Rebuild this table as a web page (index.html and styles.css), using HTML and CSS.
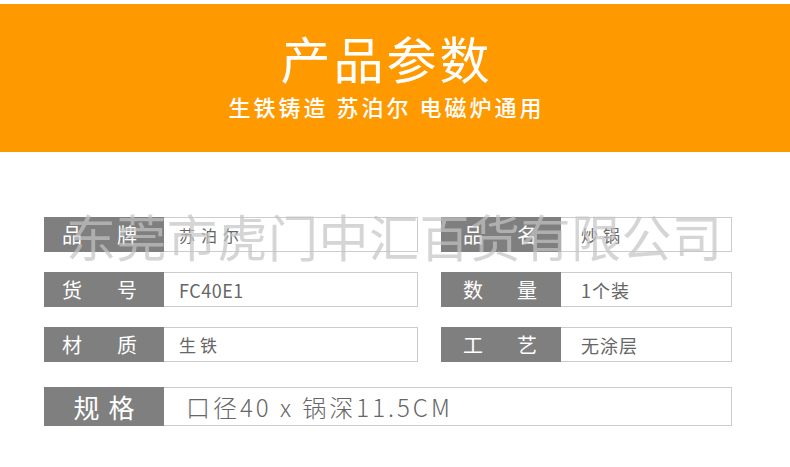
FILE: index.html
```html
<!DOCTYPE html>
<html lang="zh-CN">
<head>
<meta charset="utf-8">
<title>产品参数</title>
<link rel="stylesheet" href="styles.css">
</head>
<body>
<header class="banner">
  <h1 class="title">产品参数</h1>
  <p class="subtitle">生铁铸造 苏泊尔 电磁炉通用</p>
</header>
<section class="params">
  <div class="grid">
    <div class="field">
      <div class="label label-left"><span>品</span><span>牌</span></div>
      <div class="value value-left sp6">苏泊尔</div>
    </div>
    <div class="field">
      <div class="label label-right"><span>品</span><span>名</span></div>
      <div class="value value-right sp5">炒锅</div>
    </div>
    <div class="field">
      <div class="label label-left"><span>货</span><span>号</span></div>
      <div class="value value-left">FC40E1</div>
    </div>
    <div class="field">
      <div class="label label-right"><span>数</span><span>量</span></div>
      <div class="value value-right">1个装</div>
    </div>
    <div class="field">
      <div class="label label-left"><span>材</span><span>质</span></div>
      <div class="value value-left sp4">生铁</div>
    </div>
    <div class="field">
      <div class="label label-right"><span>工</span><span>艺</span></div>
      <div class="value value-right">无涂层</div>
    </div>
    <div class="field field-wide">
      <div class="label label-spec">规格</div>
      <div class="value value-spec">口径40 x 锅深11.5CM</div>
    </div>
  </div>
  <div class="watermark">东莞市虎门中汇百货有限公司</div>
</section>
</body>
</html>
```
FILE: styles.css
```css
* { box-sizing: border-box; }

html, body {
  margin: 0;
  padding: 0;
  background: #ffffff;
  font-family: "Noto Sans CJK SC", "Noto Sans", sans-serif;
}

.banner {
  margin-top: 4px;
  height: 148px;
  background: #ff9900;
  color: #ffffff;
  padding: 23px 17px 0 0;
  text-align: center;
}

.title {
  margin: 0;
  font-size: 50px;
  line-height: 60px;
  font-weight: 400;
  letter-spacing: 3px;
}

.subtitle {
  margin: 4px 0 0 0;
  font-size: 22px;
  line-height: 30px;
  font-weight: 500;
  letter-spacing: 3px;
}

.params {
  position: relative;
  padding: 65px 0 0 44px;
  height: 315px;
}

.grid {
  display: grid;
  grid-template-columns: 374px 291px;
  column-gap: 23px;
  row-gap: 20px;
}

.field {
  display: flex;
  height: 35px;
}

.field-wide {
  grid-column: 1 / 3;
  height: 39px;
  margin-top: 5px;
}

.label {
  width: 120px;
  flex: none;
  background: #7f7f7f;
  color: #ffffff;
  font-size: 20px;
  display: flex;
  align-items: center;
  justify-content: space-between;
}

.label-left { padding: 0 27px 0 18px; }
.label-right { padding: 0 24px 0 22px; }

.label-spec {
  justify-content: center;
  font-size: 26px;
  letter-spacing: 9px;
  padding-left: 9px;
}

.value {
  flex: 1;
  border: 1px solid #cccccc;
  border-left: none;
  color: #666666;
  font-size: 18px;
  display: flex;
  align-items: center;
  white-space: nowrap;
}

.value-left { padding-left: 15px; letter-spacing: 0.5px; }
.value-right { padding-left: 20px; letter-spacing: 1px; }
.sp6 { font-size: 16px; letter-spacing: 6px; }
.sp5 { font-size: 17px; letter-spacing: 5px; }
.sp4 { font-size: 17px; letter-spacing: 4px; }

.value-spec {
  padding-left: 22px;
  font-size: 24px;
  letter-spacing: 3px;
  font-weight: 300;
}

.watermark {
  position: absolute;
  left: 66px;
  top: 58px;
  font-size: 50px;
  line-height: 50px;
  font-weight: 400;
  letter-spacing: 0.5px;
  color: #c4c4c4;
  opacity: 0.7;
  white-space: nowrap;
  pointer-events: none;
}
```
